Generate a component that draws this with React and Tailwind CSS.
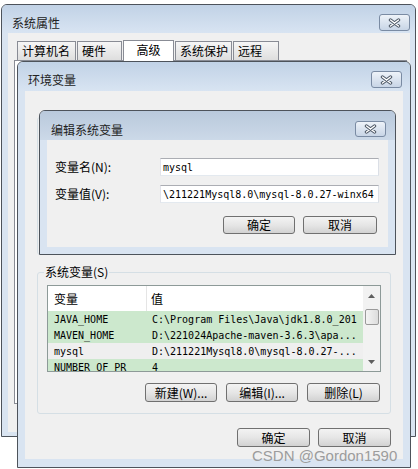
import React from 'react';

const cjk = "font-['Noto_Sans_CJK_SC','Noto_Sans',sans-serif]";
const mono = "font-['DejaVu_Sans_Mono','Liberation_Mono',monospace]";

function CloseButton({ h = 'h-[17px]' }) {
  return (
    <div
      className={`flex w-[31px] ${h} shrink-0 items-center justify-center rounded-[3px] border border-[#7a8ba3] bg-gradient-to-b from-[#eef3f9] to-[#c8d5e6]`}
    >
      <svg width="13" height="10" viewBox="0 0 13 10">
        <path d="M2.5 2 L10.5 8 M10.5 2 L2.5 8" stroke="#4a5563" strokeWidth="3.4" strokeLinecap="round" />
        <path d="M2.5 2 L10.5 8 M10.5 2 L2.5 8" stroke="#ffffff" strokeWidth="1.5" strokeLinecap="round" />
      </svg>
    </div>
  );
}

function Win({ title, box, head, headColor, frame, btnH, children }) {
  return (
    <div className={`absolute flex flex-col rounded-t-[6px] border border-[#4d535b] bg-[#d9e4f1] ${box}`}>
      <div className={`flex shrink-0 items-start justify-between rounded-t-[5px] bg-gradient-to-b ${headColor} ${head}`}>
        <span className={`${cjk} text-[12px] leading-[17px] text-[#222]`}>{title}</span>
        <CloseButton h={btnH} />
      </div>
      <div className={`flex min-h-0 flex-1 flex-col ${frame}`}>
        <div className="relative flex-1 bg-[#f0f0f0]">{children}</div>
      </div>
    </div>
  );
}

function Btn({ children, w = 'w-[72px]', h = 'h-[19px]' }) {
  return (
    <div
      className={`flex ${w} ${h} items-center justify-center rounded-[3px] border border-[#707070] bg-gradient-to-b from-[#f3f3f3] via-[#e6e6e6] to-[#d2d2d2] ${cjk} text-[12px] leading-none text-black`}
    >
      {children}
    </div>
  );
}

function Tab({ label, w, selected }) {
  if (selected) {
    return (
      <div
        className={`relative z-10 -mb-px flex h-[21px] ${w} items-start justify-center border border-b-0 border-[#898c95] bg-white pt-[1px] ${cjk} text-[12px] leading-[16px] text-black`}
      >
        {label}
      </div>
    );
  }
  return (
    <div
      className={`flex h-[19px] ${w} items-center border border-b-0 border-[#898c95] bg-gradient-to-b from-[#f6f6f6] to-[#dedede] pl-[4px] ${cjk} text-[12px] leading-none text-black`}
    >
      {label}
    </div>
  );
}

const rows = [
  { name: 'JAVA_HOME', value: 'C:\\Program Files\\Java\\jdk1.8.0_201', bg: 'bg-[#cce8cd]' },
  { name: 'MAVEN_HOME', value: 'D:\\221024Apache-maven-3.6.3\\apa...', bg: 'bg-[#cce8cd]' },
  { name: 'mysql', value: 'D:\\211221Mysql8.0\\mysql-8.0.27-...', bg: 'bg-[#efefef]' },
  { name: 'NUMBER_OF_PR', value: '4', bg: 'bg-[#cce8cd]' },
];

function VarList() {
  return (
    <div className="mx-[9px] mt-[12px] flex h-[87px] overflow-hidden border border-[#8d9a98] bg-white">
      <div className="flex min-w-0 flex-1 flex-col">
        <div className={`flex h-[25px] shrink-0 items-center ${cjk} text-[12px] text-black`}>
          <div className="flex h-full w-[99px] items-center border-r border-[#e5e5e5] pl-[6px]">变量</div>
          <div className="pl-[4px]">值</div>
        </div>
        {rows.map((r) => (
          <div key={r.name} className={`flex h-[16px] shrink-0 items-center ${r.bg} ${mono} text-[10px] text-black`}>
            <div className="w-[104px] shrink-0 pl-[6px]">{r.name}</div>
            <div className="whitespace-nowrap">{r.value}</div>
          </div>
        ))}
      </div>
      <div className="flex w-[17px] shrink-0 flex-col items-center bg-[#f2f2f2]">
        <svg className="mt-[8px]" width="7" height="4" viewBox="0 0 7 4">
          <path d="M0 4 L3.5 0 L7 4 Z" fill="#5f5f5f" />
        </svg>
        <div className="mt-[11px] h-[16px] w-[14px] rounded-[2px] border border-[#9a9a9a] bg-gradient-to-r from-[#f4f4f4] to-[#dcdcdc]" />
        <div className="flex-1" />
        <svg className="mb-[7px]" width="7" height="4" viewBox="0 0 7 4">
          <path d="M0 0 L7 0 L3.5 4 Z" fill="#5f5f5f" />
        </svg>
      </div>
    </div>
  );
}

export default function App() {
  return (
    <div className="relative h-[469px] w-[418px] overflow-hidden bg-white">
      {/* 系统属性 */}
      <Win
        title="系统属性"
        box="left-[1px] top-[4px] h-[433px] w-[415px]"
        head="h-[28px] pt-[9px] pl-[10px] pr-[5px]"
        headColor="from-[#c1d2e6] to-[#d8e4f2]"
        frame="pl-[6px] pr-[5px] pb-[4px]"
      >
        <div className="flex flex-col pt-[7px]">
          <div className="ml-[9px] flex items-end gap-[1px]">
            <Tab label="计算机名" w="w-[59px]" />
            <Tab label="硬件" w="w-[45px]" />
            <Tab label="高级" w="w-[51px]" selected />
            <Tab label="系统保护" w="w-[57px]" />
            <Tab label="远程" w="w-[46px]" />
          </div>
          <div className="ml-[6px] h-[344px] w-[393px] border border-[#898c95] bg-white" />
        </div>
      </Win>

      {/* 环境变量 */}
      <Win
        title="环境变量"
        box="left-[17px] top-[61px] h-[407px] w-[394px]"
        head="h-[29px] pt-[9px] pl-[10px] pr-[8px]"
        headColor="from-[#c1d2e6] to-[#d8e4f2]"
        frame="px-[7px] pb-[8px]"
      >
        <div className="flex flex-col px-[12px]">
          <div className="relative mt-[26px] h-[138px] rounded-[3px] border border-[#d5dfe5]">
            <span className={`absolute -top-[9px] left-[6px] bg-[#f0f0f0] px-[1px] ${cjk} text-[12px] leading-[16px] text-black`}>
              wuxuan 的用户变量(U)
            </span>
          </div>

          <div className="relative mt-[17px] flex h-[142px] flex-col rounded-[3px] border border-[#d5dfe5]">
            <span className={`absolute -top-[9px] left-[6px] bg-[#f0f0f0] px-[1px] ${cjk} text-[12px] leading-[16px] text-black`}>
              系统变量(S)
            </span>
            <VarList />
            <div className="mr-[10px] mt-[11px] flex justify-end gap-[9px]">
              <Btn>新建(W)...</Btn>
              <Btn>编辑(I)...</Btn>
              <Btn w="w-[73px]">删除(L)</Btn>
            </div>
          </div>

          <div className="mt-[14px] flex justify-end gap-[8px]">
            <Btn w="w-[73px]">确定</Btn>
            <Btn w="w-[73px]">取消</Btn>
          </div>
        </div>
      </Win>

      {/* 编辑系统变量 */}
      <Win
        title="编辑系统变量"
        box="left-[39px] top-[110px] h-[145px] w-[357px]"
        head="h-[29px] pt-[10px] pl-[11px] pr-[9px]"
        headColor="from-[#b9c9dc] to-[#ccd9e8]"
        frame="px-[7px] pb-[7px]"
        btnH="h-[16px]"
      >
        <div className="flex flex-col pl-[8px] pr-[9px] pt-[18px]">
          <div className="flex h-[18px] items-center">
            <span className={`w-[105px] ${cjk} text-[12px] text-black`}>变量名(N):</span>
            <div className={`flex h-full flex-1 items-center border border-[#abadb3] border-b-[#e3e9ef] border-l-[#e2e3ea] border-r-[#dbdfe6] bg-white pl-[2px] ${mono} text-[10px] text-black`}>
              mysql
            </div>
          </div>
          <div className="mt-[9px] flex h-[18px] items-center">
            <span className={`w-[105px] ${cjk} text-[12px] text-black`}>变量值(V):</span>
            <div className={`flex h-full flex-1 items-center overflow-hidden whitespace-nowrap border border-[#abadb3] border-b-[#e3e9ef] border-l-[#e2e3ea] border-r-[#dbdfe6] bg-white pl-[2px] ${mono} text-[10px] text-black`}>
              \211221Mysql8.0\mysql-8.0.27-winx64
            </div>
          </div>
          <div className="mt-[13px] flex justify-end gap-[8px] pr-[2px]">
            <Btn h="h-[18px]">确定</Btn>
            <Btn w="w-[74px]" h="h-[18px]">取消</Btn>
          </div>
        </div>
      </Win>

      <div className="absolute left-[252px] top-[448px] font-['Liberation_Sans',Arial,sans-serif] text-[15px] leading-[15px] text-[#9c9c9c]">
        CSDN @Gordon1590
      </div>
    </div>
  );
}
